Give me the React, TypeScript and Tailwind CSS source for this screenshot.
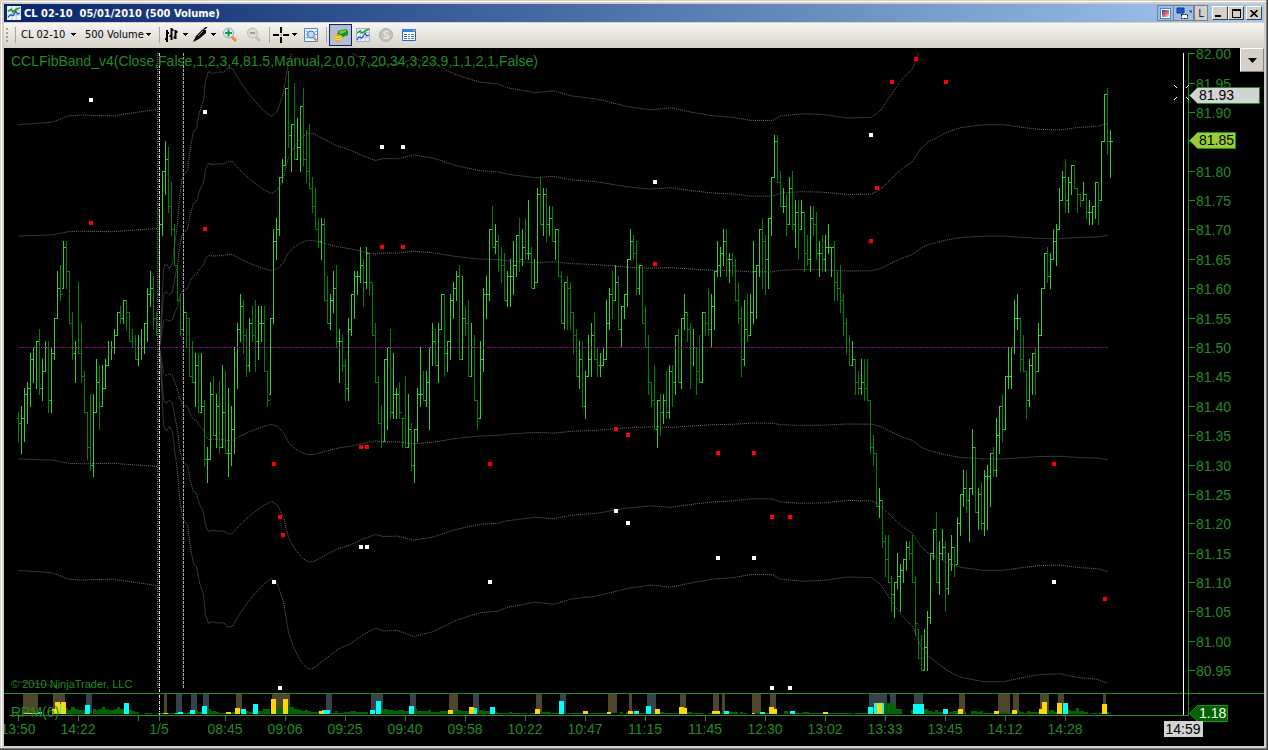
import type { ReactNode } from "react";

// one bar = high, low, close in ticks (0.01) away from 81.50
const BARS = `
-11,-16,-13 -10,-18,-12 -7,-16,-8 -6,-13,-7 -1,-10,-2 0,-6,0 1,-7,1 3,-8,-7 -2,-9,-4 1,-4,0
1,-11,-9 0,-11,-1 5,-2,5 13,5,10 14,8,9 18,10,17 18,10,13 13,4,4 6,-2,-1 1,-6,0
11,-1,-1 4,-6,-5 -4,-11,-11 -11,-19,-17 -8,-21,-20 -8,-22,-11 -2,-11,-6 -3,-14,-10 -3,-10,-7 -2,-7,-3
1,-3,0 1,-2,0 3,-1,2 6,2,6 7,4,5 8,4,8 8,3,6 6,1,1 3,0,0 2,-2,-2
2,-3,0 3,-2,0 4,-1,4 10,1,9 13,7,10 12,3,5 6,2,4 23,9,21 30,19,30 35,26,32
34,23,24 28,19,20 21,14,14 14,8,8 9,2,3 9,3,6 6,0,5 5,-5,-5 1,-6,-6 -1,-10,-3
-1,-11,-11 -1,-11,-10 -9,-20,-19 -17,-23,-19 -6,-19,-8 -5,-15,-15 -8,-17,-10 -6,-18,-17 -3,-17,-11 -4,-18,-18
-7,-22,-18 -10,-20,-14 0,-18,0 4,-7,3 9,1,7 8,-1,2 3,-5,-3 5,-4,4 7,1,2 8,-4,1
7,-2,4 7,1,4 7,-4,-4 -4,-10,-9 5,-8,5 20,4,18 22,15,20 29,19,29 32,28,31 44,31,44
47,34,36 38,30,38 45,32,32 39,32,34 41,30,41 44,31,32 37,28,30 38,27,27 29,23,24 27,20,20
22,17,18 22,15,21 22,8,8 12,4,4 9,3,8 13,6,10 14,0,1 3,-6,1 2,-4,-3 -2,-9,-7
5,-9,3 9,2,9 13,5,12 13,9,12 17,11,14 15,7,11 17,10,16 16,9,11 11,2,2 4,-6,-6
-5,-13,-13 -10,-17,-16 -2,-16,-2 0,-14,0 3,-12,-11 -1,-12,-8 -7,-12,-8 -6,-12,-11 -12,-17,-12 -5,-17,-17
-8,-17,-14 -13,-21,-20 -14,-23,-14 -7,-16,-8 0,-10,-8 -4,-9,-9 -4,-10,-6 0,-14,0 4,-3,1 3,-3,-3
4,-6,3 9,3,9 9,-5,-1 1,-4,1 9,-2,8 11,5,10 13,8,12 14,-2,-2 12,-2,5 7,2,4
8,-5,-5 4,-5,0 2,-9,-9 -9,-14,-12 1,-12,-2 10,-4,9 12,5,9 20,8,20 24,17,17 21,16,18
19,13,15 17,11,14 16,8,8 13,7,12 15,7,12 18,9,14 19,12,19 22,13,15 20,14,17 22,15,16
25,15,16 17,10,10 15,10,11 27,11,26 29,21,21 27,19,26 27,18,21 24,19,22 24,18,18 20,15,20
20,12,12 13,4,4 11,3,11 12,3,10 11,3,6 6,-1,2 3,-5,-5 1,-7,-2 1,-10,-10 -4,-12,-5
2,-5,-2 4,-5,2 6,-2,-2 0,-5,-3 -1,-5,-3 0,-3,-2 8,-2,4 10,3,9 13,5,8 14,8,11
12,3,3 7,0,7 9,5,9 15,7,15 20,15,18 19,15,16 18,9,10 14,9,14 14,4,4 7,0,0
2,-8,-6 -6,-10,-9 -3,-14,-14 -9,-17,-9 -8,-15,-11 -8,-13,-9 -4,-12,-11 -3,-12,-4 -3,-10,-6 2,-8,2
3,-6,-6 5,-7,5 9,3,6 6,1,3 4,-7,0 3,-3,0 0,-8,-4 2,-6,-6 6,-6,6 6,2,4
10,2,3 9,0,7 13,3,13 18,12,14 17,12,16 20,14,18 20,12,15 16,11,15 16,12,14 15,8,8
11,4,5 7,-5,-2 8,-3,3 9,1,2 9,2,6 18,4,13 14,5,14 20,12,20 22,10,18 19,9,15
22,10,22 29,19,29 36,29,35 36,28,28 30,24,24 27,23,24 26,19,21 29,21,27 30,20,21 25,17,23
25,15,20 25,20,23 23,13,16 19,14,15 24,13,22 24,19,21 23,15,16 18,12,16 19,13,15 19,13,17
21,16,17 17,12,17 18,8,11 13,8,10 14,6,8 9,2,4 5,-1,0 2,-3,-3 1,-3,-2 -2,-8,-6
-4,-8,-7 -2,-8,-6 -2,-9,-7 -2,-9,-9 -9,-18,-17 -15,-20,-18 -18,-27,-27 -24,-29,-26 -26,-34,-33 -32,-39,-36
-32,-40,-40 -39,-45,-42 -40,-46,-40 -35,-41,-39 -37,-45,-38 -36,-40,-36 -33,-38,-34 -33,-36,-35 -32,-40,-40 -39,-49,-47
-48,-53,-53 -49,-55,-55 -48,-55,-51 -45,-55,-46 -35,-47,-35 -31,-36,-31 -28,-40,-40 -33,-42,-35 -31,-36,-34 -33,-45,-41
-35,-42,-36 -32,-38,-34 -34,-39,-37 -29,-37,-30 -25,-32,-25 -21,-27,-24 -21,-28,-26 -24,-33,-24 -14,-25,-17 -17,-28,-28
-24,-31,-25 -23,-31,-30 -21,-32,-22 -20,-31,-22 -18,-27,-18 -17,-22,-21 -12,-22,-15 -10,-18,-10 -8,-16,-14 -5,-14,-5
0,-7,-5 0,-7,0 8,-1,5 9,3,5 5,-4,-2 2,-4,-4 -4,-12,-9 -2,-10,-3 -1,-8,-1 0,-8,-4
4,-4,2 10,2,10 16,10,16 17,11,12 16,10,15 20,15,18 21,14,20 27,20,25 30,25,29 32,23,25
29,23,28 31,26,31 31,27,27 27,23,26 26,24,25 28,25,26 26,22,23 25,21,23 24,21,24 28,22,28
28,21,25 35,25,35 43,35,43 44,33,35 37,29,35
`.trim().split(/\s+/).map((b) => b.split(",").map(Number));

const priceY = (ticks: number) => Math.round(347 - ticks * 5.876);

// x, distance of the first band from 81.50
const SPREAD: number[][] = [
  [18, 111.5], [35, 112], [52, 112.7], [68, 115.8], [80, 116.3], [112, 115.8], [135, 117.5], [157, 119],
];
const SPREAD_DAY: number[][] = [
  [159, 0], [161, 12], [163, 26], [165, 27.7], [166, 27.8], [169, 26.3], [172, 28], [174, 34], [177, 41], [179, 50],
  [182, 57], [187, 59], [190, 67], [193, 72], [196, 73], [199, 78.4], [203, 82.3], [205, 89], [208, 92], [212, 91.4],
  [217, 91.8], [223, 91.8], [228, 93.2], [232, 92.9], [240, 88.4], [250, 83.8], [260, 80], [267, 77.9], [271, 77],
  [277, 78.8], [283, 85], [288, 95], [293, 99.8], [298, 103.2], [303, 105.7], [308, 107.2], [313, 107], [323, 104.3],
  [337, 100.7], [350, 98.7], [363, 95.7], [375, 93.5], [383, 94.5], [397, 94.3], [413, 96.3], [433, 94.7], [453, 91.3],
  [467, 89.7], [480, 88.4], [497, 87.9], [507, 86.6], [535, 84.9], [553, 85.6], [570, 83.9], [597, 82.8], [627, 80.3],
  [650, 79.2], [670, 79.9], [693, 78.3], [713, 77.2], [733, 76.7], [750, 75.7], [772, 75.7], [780, 77.2], [800, 77.9],
  [822, 77.7], [847, 76.5], [871, 76.7], [880, 79], [893, 85.5], [902, 89.6], [912, 92.9], [920, 99.3], [928, 102.9],
  [947, 107.7], [960, 109.9], [983, 111.4], [1003, 111.4], [1020, 110.2], [1040, 109], [1060, 108.8], [1077, 110],
  [1097, 110.6], [1107, 112],
];

const WHITE_DOTS = [
  [91, 100], [205, 112], [382, 147], [403, 147], [655, 182], [871, 135], [361, 547], [367, 547], [274, 582],
  [490, 582], [616, 511], [628, 523], [718, 558], [754, 558], [1054, 582], [280, 688], [772, 688], [790, 688],
];
const RED_DOTS = [
  [91, 223], [205, 229], [382, 247], [403, 247], [655, 264], [871, 241], [877, 188], [892, 82], [916, 59],
  [946, 82], [361, 447], [367, 447], [274, 464], [280, 517], [283, 535], [490, 464], [616, 429], [628, 435],
  [718, 453], [754, 453], [772, 517], [790, 517], [1054, 464], [1105, 599],
];

// RPM panel: x, width
const BROWN_ZONES = [
  [23, 15], [53, 12], [164, 3], [236, 6], [272, 18], [449, 9], [536, 6], [608, 9], [629, 3], [680, 6], [713, 6],
  [722, 3], [752, 9], [770, 6], [959, 6], [998, 12], [1013, 6], [1040, 9], [1058, 6], [1103, 3],
];
const SLATE_ZONES = [
  [86, 6], [176, 6], [191, 6], [203, 6], [326, 6], [371, 12], [410, 6], [473, 6], [560, 6], [647, 9], [869, 18],
  [890, 6], [914, 9],
];
// x, height, width
const GREEN = [
  [65, 6, 3], [68, 4, 3], [71, 7, 4], [75, 5, 3], [78, 4, 12], [93, 5, 3], [96, 4, 3], [99, 5, 3], [102, 7, 3],
  [105, 5, 3], [108, 4, 6], [114, 5, 3], [117, 7, 3], [120, 5, 4], [129, 4, 3], [132, 3, 3], [135, 2, 4],
  [145, 1, 7], [156, 1, 31], [187, 2, 3], [195, 4, 3], [198, 2, 4], [206, 4, 2], [208, 5, 3], [211, 3, 5], [216, 2, 3],
  [219, 1, 13], [232, 2, 3], [246, 3, 3], [249, 2, 4], [257, 3, 6], [263, 5, 7], [274, 6, 3], [277, 5, 2], [279, 7, 3],
  [282, 5, 2], [288, 9, 2], [290, 7, 4], [294, 5, 5], [299, 4, 3], [302, 3, 3], [305, 4, 3], [308, 3, 3], [311, 2, 8],
  [330, 1, 5], [335, 3, 3], [338, 1, 6], [344, 2, 6], [350, 3, 6], [356, 2, 12], [381, 5, 7], [388, 4, 6], [394, 3, 4],
  [398, 4, 6], [404, 3, 5], [414, 5, 3], [417, 3, 11], [428, 4, 3], [431, 2, 9], [440, 3, 8], [453, 3, 5], [458, 4, 3],
  [461, 3, 8], [477, 4, 6], [483, 3, 13], [496, 2, 2], [498, 1, 11], [509, 2, 3], [512, 1, 15], [530, 1, 6],
  [541, 2, 10], [551, 1, 38], [590, 1, 10], [600, 1, 8], [620, 2, 3], [626, 2, 8], [640, 1, 15], [660, 2, 4],
  [664, 1, 14], [687, 2, 5], [692, 1, 11], [708, 1, 20], [729, 2, 9], [740, 2, 3], [743, 1, 4], [756, 1, 18],
  [784, 3, 4], [794, 1, 9], [803, 2, 6], [809, 1, 43], [854, 1, 14], [872, 3, 2], [884, 11, 8], [892, 10, 2],
  [894, 7, 2], [896, 5, 6], [911, 4, 3], [924, 5, 4], [928, 3, 4], [932, 2, 3], [935, 4, 3], [938, 2, 5], [949, 2, 4],
  [953, 3, 5], [963, 2, 3], [971, 3, 6], [977, 2, 3], [980, 3, 3], [983, 1, 11], [1000, 1, 3], [1003, 2, 3],
  [1006, 1, 6], [1017, 3, 3], [1020, 2, 4], [1024, 1, 3], [1027, 3, 3], [1030, 2, 9], [1047, 3, 3], [1050, 4, 4],
  [1054, 2, 3], [1062, 6, 2], [1068, 4, 3], [1071, 3, 5], [1076, 6, 3], [1079, 3, 5], [1084, 2, 4], [1090, 1, 7],
  [1099, 1, 5], [1107, 2, 2],
];
const CYAN = [
  [38, 2, 4], [60, 10, 1], [85, 9, 5], [124, 11, 5], [175, 1, 3], [178, 2, 5], [190, 4, 5], [202, 8, 5], [241, 5, 5],
  [253, 10, 5], [322, 4, 8], [370, 4, 5], [376, 13, 5], [409, 8, 5], [474, 6, 3], [490, 7, 5], [559, 13, 5],
  [634, 3, 5], [646, 8, 5], [724, 3, 5], [760, 2, 5], [790, 3, 5], [868, 7, 5], [874, 11, 10], [913, 10, 11],
  [943, 5, 5], [1063, 11, 5],
];
const GOLD = [
  [23, 1, 15], [52, 5, 3], [55, 12, 5], [61, 12, 5], [163, 1, 5], [226, 2, 5], [235, 6, 5], [271, 15, 5],
  [283, 15, 5], [319, 3, 5], [448, 4, 5], [469, 7, 5], [535, 5, 5], [583, 3, 5], [607, 2, 4], [628, 3, 5],
  [655, 5, 5], [679, 7, 5], [684, 6, 3], [712, 3, 8], [752, 1, 3], [769, 7, 5], [774, 5, 3], [823, 2, 5],
  [877, 11, 5], [958, 5, 5], [994, 3, 5], [1012, 4, 5], [1039, 5, 3], [1042, 12, 5], [1057, 11, 5], [1102, 10, 5],
];

const TIMES = [
  "08:45", "09:06", "09:25", "09:40", "09:58", "10:22", "10:47", "11:15",
  "11:45", "12:30", "13:02", "13:33", "13:45", "14:12", "14:28",
];
const PRICES = Array.from({ length: 22 }, (_, i) => 50 - i * 5);
const LAST = 35;

const barPath = (up: boolean) =>
  BARS.map(([high, low, close], i) => {
    const prev = i > 0 ? BARS[i - 1][2] : -12;
    if (close >= prev !== up) return "";
    const x = 18 + i * 3;
    const open = Math.max(low, Math.min(high, prev));
    return `M${x + 0.5} ${priceY(high)}V${priceY(low) + 1}M${x - 1} ${priceY(open) + 0.5}h2M${x} ${priceY(close) + 0.5}h3`;
  }).join("");

const bandPath = (points: number[][], k: number) =>
  "M" + points.map(([x, s]) => `${x + 0.5} ${(347.5 + s * k).toFixed(1)}`).join("L");

const columns = (list: number[][]) => list.map(([x, h, w]) => `M${x} ${714 - h}h${w}v${h}h-${w}z`).join("");
const zones = (list: number[][]) => list.map(([x, w]) => `M${x} 694h${w}v19h-${w}z`).join("");
const dots = (list: number[][]) => list.map(([x, y]) => `M${x - 2} ${y - 2}h4v4h-4z`).join("");

const Chart = () => (
  <svg
    viewBox="4 48 1260 698"
    className="block w-full font-['Liberation_Sans',Arial,sans-serif] text-[14px]"
    role="img"
    aria-label="CL 02-10 price chart"
  >
    <clipPath id="plot">
      <rect x="4" y="53" width="1180" height="636" />
    </clipPath>

    {/* RPM panel */}
    <g shapeRendering="crispEdges">
      <path d={zones(BROWN_ZONES)} fill="#4d452c" />
      <path d={zones(SLATE_ZONES)} fill="#36434a" />
      <path d={columns(GREEN)} fill="#006400" />
      <path d={columns(CYAN)} fill="#00ffff" />
      <path d={columns(GOLD)} fill="#ffd700" />
    </g>

    {/* Price bars */}
    <g shapeRendering="crispEdges" fill="none">
      <path d={barPath(false)} stroke="#008000" />
      <path d={barPath(true)} stroke="#32cd32" />
      <path d="M19 347.5H1108" stroke="#8b008b" strokeDasharray="3 1 1 1" />
    </g>

    {/* Bands */}
    <g clipPath="url(#plot)" fill="none" stroke="#6c6c6c" strokeDasharray="1 1">
      {[-3, -2, -1, 1, 2, 3].map((k) => (
        <g key={k}>
          <path d={bandPath(SPREAD, k)} />
          <path d={bandPath(SPREAD_DAY, k)} />
        </g>
      ))}
    </g>
    <g shapeRendering="crispEdges">
      <path d="M157.5 53V689" stroke="#696969" strokeDasharray="1 1" />
      <path d="M158.5 53V689" stroke="#303030" strokeDasharray="1 1" />
      <path d="M159.5 53V715" stroke="#e0e0e0" strokeDasharray="3 1 1 1" />
      <path d="M183.5 53V689" stroke="#a9a9a9" strokeDasharray="3 1" />
      <path d={dots(WHITE_DOTS)} fill="#ffffff" />
      <path d={dots(RED_DOTS)} fill="#ff0000" />
    </g>

    {/* Axes */}
    <g shapeRendering="crispEdges" stroke="#228b22">
      <path d="M4 693.5H1264M9 715.5H1189M1188.5 53V715" />
      <path d="M18.5 715v6M78.5 715v6M138.5 715v6M159.5 715v6" />
      {TIMES.map((t, i) => (
        <path key={t} d={`M${225.5 + i * 60} 715v6`} />
      ))}
      {PRICES.map((p) => (
        <path key={p} d={`M1189 ${priceY(p) + 0.5}h6`} />
      ))}
    </g>
    <g fill="#228b22">
      <g textAnchor="middle">
        <text x="18" y="734">13:50</text>
        <text x="78" y="734">14:22</text>
        <text x="159" y="734">1/5</text>
        {TIMES.map((t, i) => (
          <text key={t} x={225 + i * 60} y="734">{t}</text>
        ))}
      </g>
      {/* the last price has its own marker */}
      {PRICES.filter((p) => p !== LAST).map((p) => (
        <text key={p} x="1196" y={priceY(p) + 6}>{((8150 + p) / 100).toFixed(2)}</text>
      ))}
      <text x="11" y="66">CCLFibBand_v4(Close,False,1,2,3,4,81.5,Manual,2,0,0,7,20,34,3,23.9,1,1,2,1,False)</text>
      <text x="11" y="717">RPM(6)</text>
      <text x="11" y="688" fontSize="11">© 2010 NinjaTrader, LLC</text>
    </g>

    {/* Crosshair and markers */}
    <path d="M1183.5 53V715" stroke="#ffffff" shapeRendering="crispEdges" />
    <path d="M1174 85l3 3M1189 85l-3 3M1174 100l3-3M1186 97l3 3" stroke="#ffffff" />
    <g stroke="#228b22">
      <path d="M1189.5 95.5l8-8h62v16h-62z" fill="#d3d3d3" />
      <path d="M1189.5 140.5l8-8h38v16h-38z" fill="#9acd32" />
      <path d="M1189.5 713.5l8-8h30v16h-30z" fill="#006400" />
    </g>
    <rect x="1164" y="721" width="39" height="16" fill="#d3d3d3" />
    <text x="1199" y="100" fill="#000000">81.93</text>
    <text x="1199" y="145" fill="#000000">81.85</text>
    <text x="1199" y="718" fill="#ffffff">1.18</text>
    <text x="1183" y="734" textAnchor="middle" fill="#000000">14:59</text>
  </svg>
);

const Arrow = () => (
  <svg viewBox="0 0 5 3" className="w-[5px] h-[3px] shrink-0" shapeRendering="crispEdges" aria-hidden="true">
    <path d="M0 0h5v1h-1v1h-1v1h-1v-1h-1v-1h-1z" fill="#000" />
  </svg>
);

const Icon = ({ children }: { children: ReactNode }) => (
  <svg viewBox="0 0 16 16" className="w-4 h-4 shrink-0" fill="none" aria-hidden="true">
    {children}
  </svg>
);

const ChartIcon = () => (
  <Icon>
    <path d="M1.500 1.500h13v13h-13z" fill="#eaf2fa" stroke="#98b0c8" />
    <path d="M1 5.500h14M1 10.500h14M5.500 1v14M10.500 1v14" stroke="#b8c8d8" />
    <path d="M2 6l3-2 2 2 3-2 4-2" stroke="#22a022" strokeWidth="1.500" />
    <path d="M2 13l2-3 3 1 3-5 2 3 2-1" stroke="#2450c0" strokeWidth="1.200" />
  </Icon>
);

const Separator = () => <div className="w-px h-4 bg-[#a8a69e]" />;

const Dropdown = ({ label, option, className }: { label: string; option: string; className: string }) => (
  <label className={`relative flex items-center ${className}`}>
    <select aria-label={label} className="w-full appearance-none bg-transparent outline-none text-black">
      <option>{option}</option>
    </select>
    <span className="absolute right-px pointer-events-none">
      <Arrow />
    </span>
  </label>
);

const CAPTION =
  "h-3.5 flex items-center justify-center bg-[#d4d0c8] border border-t-white border-l-white border-r-[#404040] border-b-[#404040]";

const App = () => {
  return (
    <div className="min-h-screen bg-[#d4d0c8] p-1 shadow-[inset_-1px_-1px_0_#404040,inset_-2px_-2px_0_#808080,inset_1px_1px_0_#d4d0c8,inset_2px_2px_0_#ffffff] font-['DejaVu_Sans_Condensed','Noto_Sans',sans-serif] text-[11px] leading-none">
      {/* Title bar */}
      <header className="flex items-center h-[18px] pl-[3px] pr-0.5 bg-linear-to-r from-[#0a246a] to-[#a6caf0]">
        <svg viewBox="0 0 16 16" className="w-3.5 h-3.5 shrink-0" fill="none" aria-hidden="true">
          <path d="M0 0h16v16H0z" fill="#eef4fa" />
          <path d="M0 5.500h16M0 10.500h16M5.500 0v16M10.500 0v16" stroke="#b8c4d0" />
          <path d="M1 6l4-2 2 3 3-3 5-2" stroke="#22a022" strokeWidth="2" />
          <path d="M1 13l3-3 3 1 3-5 2 3 3-1" stroke="#2450c0" strokeWidth="1.500" />
        </svg>
        <h1 className="ml-[3px] font-bold text-white whitespace-pre">CL 02-10  05/01/2010 (500 Volume)</h1>

        <div className="ml-auto flex items-center">
          <button type="button" aria-label="Link colour" className="w-[17px] h-4 border border-[#808080] flex items-center justify-center">
            <span className="w-[11px] h-[11px] border border-[#1e90ff] bg-white p-px flex">
              <span className="flex-1 bg-linear-to-br from-[#7020a0] via-[#d06070] to-[#ffe060]" />
            </span>
          </button>
          <button type="button" aria-label="Link window" className="w-5 h-4 border-y border-r border-[#808080] flex items-center justify-center">
            <svg viewBox="0 0 16 12" className="w-4 h-3" aria-hidden="true">
              <path d="M1 1h7v5H1z" fill="#1c5cc8" stroke="#103880" />
              <path d="M5.500 7.500h6v4h-6z" fill="#fff" stroke="#000" strokeDasharray="2 1" />
              <path d="M13 4h3M14 5h2" stroke="#103880" />
            </svg>
          </button>
          <button type="button" className="w-3.5 h-4 bg-[#d4d0c8] border border-[#808080] text-[#0a246a]">L</button>
          <button type="button" aria-label="Minimize" className={`ml-1 w-4 ${CAPTION}`}>
            <span className="w-1.5 h-0.5 mt-1.5 mr-1 bg-black" />
          </button>
          <button type="button" aria-label="Maximize" className={`w-4 ${CAPTION}`}>
            <span className="w-[9px] h-[9px] border border-t-2 border-black" />
          </button>
          <button type="button" aria-label="Close" className={`ml-0.5 w-4 ${CAPTION}`}>
            <svg viewBox="0 0 8 7" className="w-2 h-[7px]" aria-hidden="true">
              <path d="M.5 0l7 7M7.500 0l-7 7" stroke="#000" strokeWidth="1.600" />
            </svg>
          </button>
        </div>
      </header>

      {/* Toolbar */}
      <nav className="flex items-center h-[26px] border-t border-[#d4d0c8] pb-0.5 bg-linear-to-b from-[#f8f7f5] to-[#d6d2ca]">
        <div className="mx-0.5 w-0.5 h-3.5 border-l-2 border-dotted border-[#a0a098]" />
        <div className="ml-[5px]"><Separator /></div>
        <Dropdown label="Instrument" option="CL 02-10" className="ml-[5px] w-14" />
        <Dropdown label="Period" option="500 Volume" className="ml-2 w-[67px]" />
        <div className="ml-[7px]"><Separator /></div>

        <button type="button" aria-label="Chart style" className="ml-1 w-6 flex items-center justify-between">
          <Icon>
            <path d="M3 3v12M7.500 1v12M11.500 3v9M1 12h2M3 6h2M5.500 9h2M7.500 3h2M9.500 10.500h2M11.500 5h2" stroke="#000" strokeWidth="2" />
          </Icon>
          <Arrow />
        </button>
        <button type="button" aria-label="Drawing tools" className="ml-1 w-6 flex items-center justify-between">
          <Icon>
            <path d="M1 15l3-6 7-7 3 1v3l-7 6z" fill="#000" />
            <path d="M12 2l3-2M5 10l6-6" stroke="#000" strokeWidth="1.500" />
            <path d="M6 9l5-5" stroke="#999" />
          </Icon>
          <Arrow />
        </button>
        <button type="button" aria-label="Zoom in" className="ml-1.5">
          <Icon>
            <path d="M10 10l4 4" stroke="#f08828" strokeWidth="3" />
            <circle cx="6.500" cy="6" r="5" fill="#d8ecfa" stroke="#88a8c8" />
            <path d="M3 6h7M6.500 2.500v7" stroke="#18a030" strokeWidth="2" />
          </Icon>
        </button>
        <button type="button" aria-label="Zoom out" className="ml-2">
          <Icon>
            <path d="M10 10l4 4" stroke="#c0beb8" strokeWidth="3" />
            <circle cx="6.500" cy="6" r="5" fill="#dddbd6" stroke="#bcbab4" />
            <path d="M4 6h5" stroke="#a09e98" strokeWidth="2" />
          </Icon>
        </button>
        <div className="ml-[7px]"><Separator /></div>
        <button type="button" aria-label="Crosshair" className="ml-[3px] w-6 flex items-center justify-between">
          <Icon>
            <path d="M0 8h6M10 8h6M8 0v6M8 10v6" stroke="#000" strokeWidth="2" />
            <path d="M7.500 7.500h1v1h-1z" fill="#000" />
          </Icon>
          <Arrow />
        </button>
        <button type="button" aria-label="Data box" className="ml-1.5">
          <Icon>
            <path d="M1.500 1.500h13v13h-13z" fill="#e8f2fc" stroke="#5088c8" />
            <path d="M3 4.500h2M3 7.500h2M3 10.500h2M12 4.500h2M12 7.500h2" stroke="#88a8d0" />
            <circle cx="8" cy="7.500" r="3.500" fill="#b8dcf8" stroke="#4070a8" />
            <path d="M10.500 10.500l3 3" stroke="#f08828" strokeWidth="2" />
          </Icon>
        </button>
        <div className="ml-[7px]"><Separator /></div>
        <button type="button" aria-label="Chart trader" className="ml-0.5 w-[23px] h-[22px] flex items-center justify-center bg-[#b6bdd2] border border-[#0a246a]">
          <Icon>
            <path d="M5 4l8-2 2 2v4l-8 3-3-3z" fill="#18901c" />
            <path d="M6 4.500l7-1.500v2l-6 2z" fill="#70d040" />
            <path d="M1 8l4-1 4 2v4l-4 2-4-2z" fill="#e0a818" />
            <path d="M1 9l4 1.500 4-1.500M1 11.500l4 1.500 4-1.500" stroke="#fff078" />
          </Icon>
        </button>
        <button type="button" aria-label="Indicators" className="ml-[3px]"><ChartIcon /></button>
        <button type="button" aria-label="Strategies" className="ml-[7px]">
          <Icon>
            <circle cx="8" cy="8" r="6.500" fill="#c4c2be" stroke="#b0aeaa" />
            <path d="M10.500 5.500c-1-1.500-4.500-1.200-4.500.7 0 2 4.500 1.200 4.500 3.300 0 2-4 2-5 .5" stroke="#e8e6e2" strokeWidth="1.500" />
          </Icon>
        </button>
        <button type="button" aria-label="Properties" className="ml-[7px]">
          <Icon>
            <path d="M1.500 2.500h13v11h-13z" fill="#fff" stroke="#2860c0" />
            <path d="M1 2h14v3H1z" fill="#3c80e0" />
            <path d="M12 3h2v1h-2z" fill="#f0c040" />
            <path d="M3 7.500h3M3 9.500h3M3 11.500h3M7 7.500h2M7 9.500h2M7 11.500h2M10 7.500h3M10 9.500h3M10 11.500h3" stroke="#4878b8" />
          </Icon>
        </button>
      </nav>

      {/* Chart */}
      <main className="relative bg-black">
        <Chart />
        <button
          type="button"
          aria-label="Show price markers"
          className="absolute top-0 right-0 w-6 h-6 flex items-center justify-center bg-[#d4d0c8] border border-t-white border-l-white border-r-[#808080] border-b-[#808080]"
        >
          <svg viewBox="0 0 9 5" className="w-[9px] h-[5px]" aria-hidden="true">
            <path d="M0 0h9l-4.500 5z" fill="#000" />
          </svg>
        </button>
      </main>
    </div>
  );
};

export default App;
